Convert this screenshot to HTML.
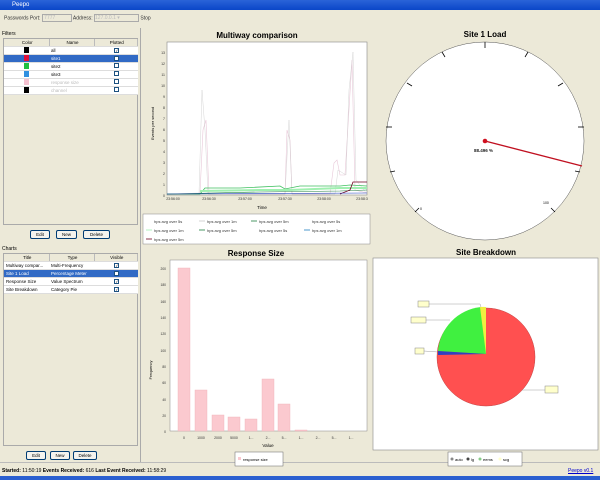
<!DOCTYPE html>
<html><head><meta charset="utf-8"><style>
*{margin:0;padding:0;box-sizing:border-box}
body{width:600px;height:480px;background:#ece9d8;font-family:"Liberation Sans",sans-serif;font-size:5px;color:#000;position:relative;overflow:hidden}
.abs{position:absolute}
.tb{left:0;top:0;width:600px;height:10px;background:linear-gradient(#2a63d8,#0a46c8);color:#fff;font-size:6px;padding:2px 0 0 12px}
table{border-collapse:collapse;font-size:4.5px}
td{height:8px;border-bottom:1px solid #ddd;padding-left:2px;white-space:nowrap;overflow:hidden}
.hdr td{background:#ece9d8;border-right:1px solid #bbb;text-align:center;height:7px}
.sel td{background:#316ac5;color:#fff}
.cb{display:inline-block;width:5px;height:5px;border:1px solid #1c5180;background:#fff;font-size:4px;line-height:4px;text-align:center}
.btn{position:absolute;height:9px;border:1px solid #003c74;border-radius:2px;background:#f4f3ee;font-size:4.5px;text-align:center;line-height:7px}
</style></head><body>
<div class="abs tb">Peepo</div>
<div class="abs" style="left:4px;top:14px;font-size:5px;color:#333">Passwords Port: <span style="display:inline-block;width:30px;height:8px;border:1px solid #aaa;color:#bbb;vertical-align:middle">&nbsp;7777</span> Address: <span style="display:inline-block;width:45px;height:8px;border:1px solid #aaa;color:#bbb;vertical-align:middle">127.0.0.1 ▾</span> Stop</div>
<div class="abs" style="left:2px;top:31px">Filters</div>
<div class="abs" style="left:3px;top:38px;width:135px;height:187px;border:1px solid #aaa;background:#ece9d8">
<table style="width:134px;background:#fff">
<tr class="hdr"><td style="width:45px">Color</td><td style="width:45px">Name</td><td>Plotted</td></tr>
<tr><td><span style="margin-left:18px;display:inline-block;width:5px;height:6px;background:#000"></span></td><td>all</td><td style="text-align:center"><span class="cb">✓</span></td></tr>
<tr class="sel"><td><span style="margin-left:18px;display:inline-block;width:5px;height:6px;background:#e0103a"></span></td><td>site1</td><td style="text-align:center"><span class="cb">✓</span></td></tr>
<tr><td><span style="margin-left:18px;display:inline-block;width:5px;height:6px;background:#20c040"></span></td><td>site2</td><td style="text-align:center"><span class="cb"></span></td></tr>
<tr><td><span style="margin-left:18px;display:inline-block;width:5px;height:6px;background:#3090e0"></span></td><td>site3</td><td style="text-align:center"><span class="cb"></span></td></tr>
<tr><td><span style="margin-left:18px;display:inline-block;width:5px;height:6px;background:#f4c0d0"></span></td><td style="color:#bbb">response size</td><td style="text-align:center"><span class="cb"></span></td></tr>
<tr><td><span style="margin-left:18px;display:inline-block;width:5px;height:6px;background:#000"></span></td><td style="color:#bbb">channel</td><td style="text-align:center"><span class="cb"></span></td></tr>
</table></div>
<div class="btn" style="left:30px;top:230px;width:20px">Edit</div>
<div class="btn" style="left:56px;top:230px;width:21px">New</div>
<div class="btn" style="left:83px;top:230px;width:27px">Delete</div>
<div class="abs" style="left:2px;top:246px">Charts</div>
<div class="abs" style="left:3px;top:253px;width:135px;height:193px;border:1px solid #aaa;background:#ece9d8">
<table style="width:134px;background:#fff">
<tr class="hdr"><td style="width:45px">Title</td><td style="width:45px">Type</td><td>Visible</td></tr>
<tr><td>Multiway compar...</td><td>Multi-Frequency</td><td style="text-align:center"><span class="cb">✓</span></td></tr>
<tr class="sel"><td>Site 1 Load</td><td>Percentage Meter</td><td style="text-align:center"><span class="cb">✓</span></td></tr>
<tr><td>Response Size</td><td>Value Spectrum</td><td style="text-align:center"><span class="cb">✓</span></td></tr>
<tr><td>Site Breakdown</td><td>Category Pie</td><td style="text-align:center"><span class="cb">✓</span></td></tr>
</table></div>
<div class="btn" style="left:26px;top:451px;width:20px">Edit</div>
<div class="btn" style="left:50px;top:451px;width:20px">New</div>
<div class="btn" style="left:73px;top:451px;width:24px">Delete</div>
<div class="abs" style="left:140px;top:28px;width:1px;height:434px;background:#aaa"></div>
<div class="abs" style="left:0;top:462px;width:600px;height:1px;background:#bbb"></div>
<div class="abs" style="left:2px;top:468px;font-size:5px"><b>Started:</b> 11:50:19 <b>Events Received:</b> 616 <b>Last Event Received:</b> 11:58:29</div>
<div class="abs" style="left:568px;top:468px;font-size:5px;color:#00c;text-decoration:underline">Peepo v0.1</div>
<div class="abs" style="left:0;top:476px;width:600px;height:4px;background:#2a5fd0"></div>

<svg class="abs" style="left:0;top:0" width="600" height="480" font-family="Liberation Sans, sans-serif">
<!-- Multiway -->
<text x="257" y="38" font-size="8" font-weight="bold" text-anchor="middle">Multiway comparison</text>
<rect x="167" y="42" width="200" height="153" fill="#fff" stroke="#888" stroke-width="0.6"/>
<g font-size="3.5" fill="#333" text-anchor="end">
<text x="165" y="197">0</text><text x="165" y="186">1</text><text x="165" y="175">2</text><text x="165" y="164">3</text><text x="165" y="153">4</text><text x="165" y="142">5</text><text x="165" y="131">6</text><text x="165" y="120">7</text><text x="165" y="109">8</text><text x="165" y="98">9</text><text x="165" y="87">10</text><text x="165" y="76">11</text><text x="165" y="65">12</text><text x="165" y="54">13</text>
</g>
<text x="154" y="140" font-size="4" transform="rotate(-90 154 140)">Events per second</text>
<g font-size="3.5" fill="#333" text-anchor="middle"><text x="173" y="200">23:56:00</text><text x="209" y="200">23:56:30</text><text x="245" y="200">23:57:00</text><text x="285" y="200">23:57:30</text><text x="324" y="200">23:58:00</text><text x="362" y="200">23:58:3</text></g>
<text x="262" y="209" font-size="4.5" text-anchor="middle">Time</text>
<polyline fill="none" stroke="#e8c8d8" stroke-width="0.6" points="167,194 200,193 203,130 206,120 209,194 285,194 287,130 290,140 292,194 330,194 334,163 337,160 340,175 345,175 352,60 355,190 367,193"/>
<polyline fill="none" stroke="#ccc" stroke-width="0.4" points="167,194 199,194 202,90 205,130 208,194 285,194 289,120 292,194 335,194 338,170 346,175 349,90 353,52 356,180 367,194"/>
<polyline fill="none" stroke="#40c060" stroke-width="0.8" points="167,194 200,194 205,188 240,188 280,186 285,189 300,186 340,186 350,185 367,186"/>
<polyline fill="none" stroke="#a0f0b0" stroke-width="2" points="200,191 260,190 290,190 340,188 367,188"/>
<polyline fill="none" stroke="#208040" stroke-width="0.6" points="167,194 260,192 340,191 367,190"/>
<polyline fill="none" stroke="#700020" stroke-width="0.8" points="340,194 350,190 353,182 367,182"/>
<polyline fill="none" stroke="#2040c0" stroke-width="0.6" points="167,194 367,193"/>
<rect x="143" y="214" width="227" height="30" fill="#fff" stroke="#888" stroke-width="0.5"/>
<g font-size="4" fill="#333">
<text x="154" y="223">hps avg over 5s</text><text x="207" y="223">hps avg over 1m</text><text x="259" y="223">hps avg over 5m</text><text x="312" y="223">hps avg over 5s</text>
<text x="154" y="232">hps avg over 1m</text><text x="207" y="232">hps avg over 5m</text><text x="259" y="232">hps avg over 5s</text><text x="312" y="232">hps avg over 1m</text>
<text x="154" y="241">hps avg over 5m</text></g>
<g stroke-width="0.8"><line x1="146" y1="221" x2="152" y2="221" stroke="#fff"/><line x1="199" y1="221" x2="205" y2="221" stroke="#ccc"/><line x1="251" y1="221" x2="257" y2="221" stroke="#208040"/><line x1="146" y1="230" x2="152" y2="230" stroke="#a0f0b0"/><line x1="199" y1="230" x2="205" y2="230" stroke="#208040"/><line x1="304" y1="230" x2="310" y2="230" stroke="#2080c0"/><line x1="146" y1="239" x2="152" y2="239" stroke="#700020"/></g>
<!-- Gauge -->
<text x="485" y="37" font-size="8" font-weight="bold" text-anchor="middle">Site 1 Load</text>
<circle cx="485" cy="141" r="99" fill="#fff" stroke="#555" stroke-width="0.5"/>
<g stroke="#000" stroke-width="0.8">
<line x1="485" y1="42" x2="485" y2="48"/><line x1="442" y1="52" x2="445" y2="57"/><line x1="528" y1="52" x2="525" y2="57"/>
<line x1="407" y1="83" x2="412" y2="86"/><line x1="563" y1="83" x2="558" y2="86"/><line x1="386" y1="127" x2="392" y2="127"/><line x1="584" y1="127" x2="578" y2="127"/>
<line x1="390" y1="172" x2="395" y2="171"/><line x1="580" y1="172" x2="575" y2="171"/><line x1="415" y1="212" x2="419" y2="208"/><line x1="555" y1="212" x2="551" y2="208"/></g>
<text x="420" y="210" font-size="3.5">0</text><text x="543" y="204" font-size="3.5">100</text>
<line x1="485" y1="141" x2="582" y2="166" stroke="#c01020" stroke-width="1.3"/>
<circle cx="485" cy="141" r="2.3" fill="#d01020"/>
<text x="474" y="152" font-size="4.5" font-weight="bold" fill="#222">88.496 %</text>
<!-- Response size -->
<text x="256" y="256" font-size="8" font-weight="bold" text-anchor="middle">Response Size</text>
<rect x="170" y="260" width="197" height="171" fill="#fff" stroke="#888" stroke-width="0.5"/>
<g fill="#fbc9cf" stroke="#f0b0b8" stroke-width="0.4">
<rect x="178" y="268" width="12" height="163"/><rect x="195" y="390" width="12" height="41"/><rect x="212" y="415" width="12" height="16"/><rect x="228" y="417" width="12" height="14"/><rect x="245" y="419" width="12" height="12"/><rect x="262" y="379" width="12" height="52"/><rect x="278" y="404" width="12" height="27"/><rect x="295" y="430" width="12" height="1"/></g>
<g font-size="3.3" fill="#333" text-anchor="end">
<text x="166" y="433">0</text><text x="166" y="417">20</text><text x="166" y="401">40</text><text x="166" y="384">60</text><text x="166" y="368">80</text><text x="166" y="352">100</text><text x="166" y="335">120</text><text x="166" y="319">140</text><text x="166" y="303">160</text><text x="166" y="286">180</text><text x="166" y="270">200</text></g>
<text x="152" y="370" font-size="4" transform="rotate(-90 152 370)" text-anchor="middle">Frequency</text>
<g font-size="3.5" fill="#333" text-anchor="middle"><text x="184" y="439">0</text><text x="201" y="439">1000</text><text x="218" y="439">2000</text><text x="234" y="439">5000</text><text x="251" y="439">1...</text><text x="268" y="439">2...</text><text x="284" y="439">5...</text><text x="301" y="439">1...</text><text x="318" y="439">2...</text><text x="334" y="439">5...</text><text x="351" y="439">1...</text></g>
<text x="268" y="447" font-size="4.5" text-anchor="middle">Value</text>
<rect x="235" y="452" width="48" height="14" fill="#fff" stroke="#666" stroke-width="0.5"/>
<rect x="238" y="457" width="3" height="3" fill="#fbc9cf"/>
<text x="243" y="461" font-size="4">response size</text>
<!-- Site breakdown -->
<text x="486" y="255" font-size="8" font-weight="bold" text-anchor="middle">Site Breakdown</text>
<rect x="373" y="258" width="225" height="192" fill="#fff" stroke="#888" stroke-width="0.6"/>
<circle cx="486" cy="357" r="49" fill="#ff5050" stroke="#c04040" stroke-width="0.5"/>
<path d="M486,354 L481,307 A48,48 0 0,0 438,351 Z" fill="#40f040"/>
<path d="M486,354 L438,351 A48,48 0 0,0 438,355 Z" fill="#3040c0"/>
<path d="M486,354 L486,307 A48,48 0 0,0 480,307 Z" fill="#f0f040"/>
<g fill="#ffffcc" stroke="#888" stroke-width="0.5"><rect x="418" y="301" width="11" height="6"/><rect x="411" y="317" width="15" height="6"/><rect x="415" y="348" width="9" height="6"/><rect x="545" y="386" width="13" height="7"/></g>
<g stroke="#888" stroke-width="0.4" fill="none"><polyline points="429,304 480,304 481,307"/><polyline points="426,320 450,320"/><polyline points="424,351 438,352"/><polyline points="545,390 522,390"/></g>
<rect x="448" y="452" width="74" height="14" fill="#fff" stroke="#666" stroke-width="0.5"/>
<g font-size="4"><circle cx="452" cy="459" r="1.5" fill="#888"/><text x="455" y="461">auto</text><circle cx="468" cy="459" r="1.5" fill="#444"/><text x="471" y="461">lg</text><circle cx="480" cy="459" r="1.5" fill="#8c8"/><text x="483" y="461">eems</text><circle cx="500" cy="459" r="1.5" fill="#ffc"/><text x="503" y="461">scg</text></g>
</svg>
</body></html>
